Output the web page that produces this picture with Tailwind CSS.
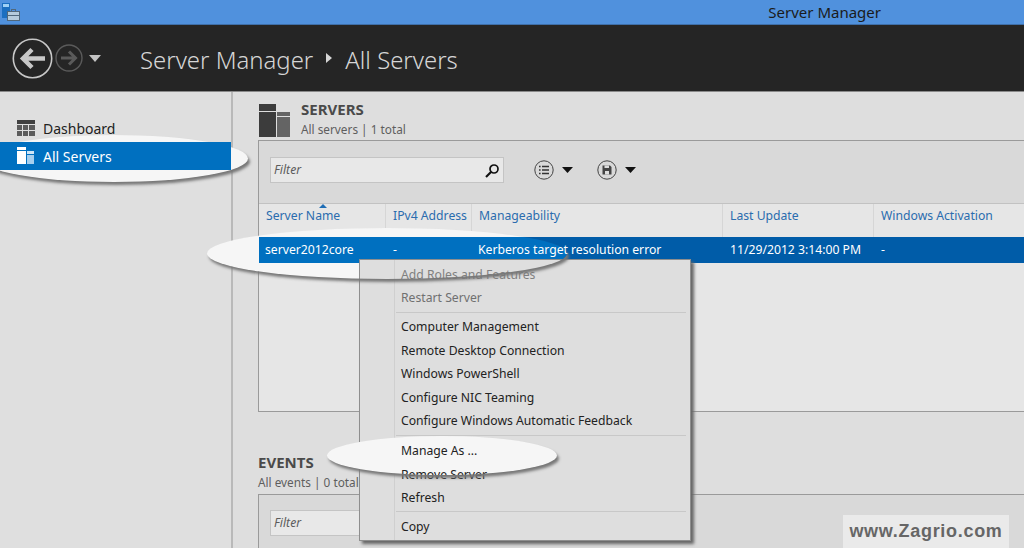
<!DOCTYPE html>
<html lang="en">
<head>
<meta charset="UTF-8">
<title>Server Manager - All Servers</title>
<script src="https://cdn.jsdelivr.net/npm/@tailwindcss/browser@4"></script>
</head>
<body class="w-[1024px] h-[548px] overflow-hidden bg-[#dedede] font-['Noto_Sans',sans-serif] relative">

  <!-- Title bar -->
  <header class="h-[25px] bg-[#5091dd] border-b border-[#3f6fa8] relative flex items-center justify-end pr-[143px]">
    <svg class="absolute left-[2px] top-[3px]" width="18" height="18" viewBox="0 0 18 18">
      <rect x="0" y="0" width="8" height="15" fill="#1c6fc0"/>
      <rect x="1" y="1" width="6" height="3" fill="#9fd0f5"/>
      <rect x="5.5" y="8.5" width="12" height="9" fill="#b5cbdc" stroke="#50687c" stroke-width="1"/>
      <rect x="9.5" y="6.5" width="4" height="2" fill="none" stroke="#50687c"/>
      <rect x="6" y="12" width="11" height="1" fill="#50687c"/>
    </svg>
    <span class="text-[15px] text-[#1b1b1b]">Server Manager</span>
  </header>

  <!-- Nav bar -->
  <nav class="h-[67px] bg-[#252525] border-b border-[#8a8a8a] flex items-center pl-[12px]">
    <svg width="41" height="41" viewBox="0 0 41 41" class="shrink-0">
      <circle cx="20.5" cy="20.5" r="19.2" fill="none" stroke="#c8c8c8" stroke-width="1.6"/>
      <path d="M33 20.5H11M20 11.5l-9 9 9 9" fill="none" stroke="#c8c8c8" stroke-width="4.5"/>
    </svg>
    <svg width="28" height="28" viewBox="0 0 28 28" class="shrink-0 ml-[2px]">
      <circle cx="14" cy="14" r="13" fill="none" stroke="#5a5a5a" stroke-width="1.4"/>
      <path d="M6 14h14M14 7.5l6.5 6.5-6.5 6.5" fill="none" stroke="#5a5a5a" stroke-width="3"/>
    </svg>
    <svg width="12" height="7" viewBox="0 0 12 7" class="shrink-0 ml-[6px]"><path d="M0 0h12L6 7z" fill="#c4c4c4"/></svg>
    <span class="ml-[39px] text-[23.9px] font-light text-[#d6d6d6] pt-[3px]">Server Manager</span>
    <svg width="6" height="10" viewBox="0 0 6 10" class="mx-[13px]"><path d="M0 0l6 5-6 5z" fill="#d6d6d6"/></svg>
    <span class="text-[23.9px] font-light text-[#d6d6d6] pt-[3px]">All Servers</span>
  </nav>

  <div class="flex h-[456px]">
    <!-- Sidebar -->
    <aside class="w-[231px] shrink-0 pt-[22px] border-r-[2px] border-[#b9b9b9] box-content bg-[#dfdfdf]">
      <div class="h-[28px] flex items-center pl-[17px] gap-[8px] relative z-20">
        <svg width="18" height="16" viewBox="0 0 18 16">
          <rect width="18" height="4" fill="#404040"/>
          <path d="M0 5h5v5H0zM6 5h5v5H6zM12 5h6v5h-6zM0 11h5v5H0zM6 11h5v5H6zM12 11h6v5h-6z" fill="#5c5c5c"/>
        </svg>
        <span class="text-[14px] text-[#222]">Dashboard</span>
      </div>
      <div class="h-[28px] bg-[#0070c0] flex items-center pl-[17px] gap-[8px] relative z-20">
        <svg width="18" height="18" viewBox="0 0 18 18">
          <rect width="9" height="17" y="0" fill="#fff"/>
          <rect x="0" y="3" width="9" height="1" fill="#0070c0"/>
          <rect x="10" y="4" width="7" height="3" fill="#cfe6f7"/>
          <rect x="10" y="8" width="7" height="9" fill="#a6cfee"/>
        </svg>
        <span class="text-[14px] text-white">All Servers</span>
      </div>
    </aside>

    <!-- Main -->
    <main class="flex-1 pl-[25px] pt-[10px] bg-[#dedede]">
      <section class="flex items-start gap-[11px] h-[38px] pl-[1px]">
        <svg width="31" height="33" viewBox="0 0 31 33" class="shrink-0 mt-[2px]">
          <rect width="17" height="7" y="0" x="0" fill="#3c3c3c"/>
          <rect width="17" height="25" y="8" x="0" fill="#3c3c3c"/>
          <rect width="13" height="4" y="8" x="18" fill="#646464"/>
          <rect width="13" height="20" y="13" x="18" fill="#646464"/>
        </svg>
        <div class="leading-none">
          <h2 class="text-[15px] font-bold text-[#4a4a4a] leading-[17px] -mt-[1px]">SERVERS</h2>
          <p class="text-[11.8px] text-[#5e5e5e] leading-[18px] mt-[2px]">All servers | 1 total</p>
        </div>
      </section>

      <!-- Servers panel -->
      <section class="h-[272px] border border-[#9a9a9a] border-r-0 bg-[#e6e6e6]">
        <div class="h-[62px] bg-[#d9d9d9] flex items-start pt-[16px] pl-[11px]">
          <div class="w-[234px] h-[26px] bg-[#e8e8e8] border border-[#c4c4c4] flex items-center justify-between pl-[3px] pr-[3px]">
            <span class="text-[12.2px] italic text-[#5c5c5c]">Filter</span>
            <svg width="15" height="15" viewBox="0 0 15 15"><circle cx="9" cy="6" r="4" fill="none" stroke="#111" stroke-width="1.7"/><path d="M6 9l-5 5" stroke="#111" stroke-width="2.2"/></svg>
          </div>
          <svg width="20" height="20" viewBox="0 0 20 20" class="ml-[30px] mt-[3px]">
            <circle cx="10" cy="10" r="9.2" fill="none" stroke="#444" stroke-width="1"/>
            <path d="M8 6.5h7M8 10h7M8 13.5h7M5 6.5h1.6M5 10h1.6M5 13.5h1.6" stroke="#333" stroke-width="1.7"/>
          </svg>
          <svg width="11" height="6" viewBox="0 0 11 6" class="ml-[8px] mt-[10px]"><path d="M0 0h11L5.5 6z" fill="#111"/></svg>
          <svg width="20" height="20" viewBox="0 0 20 20" class="ml-[24px] mt-[3px]">
            <circle cx="10" cy="10" r="9.2" fill="none" stroke="#444" stroke-width="1"/>
            <path d="M5.5 5.5h7.5l1.5 1.5v7.5h-9z" fill="#444"/><rect x="7.5" y="5.5" width="4.5" height="2.5" fill="#ddd"/><rect x="8" y="11" width="4" height="3.5" fill="#ddd"/>
          </svg>
          <svg width="11" height="6" viewBox="0 0 11 6" class="ml-[8px] mt-[10px]"><path d="M0 0h11L5.5 6z" fill="#111"/></svg>
        </div>
        <div class="h-[34px] flex text-[12.2px] text-[#2a6cae] border-t border-[#c2c2c2] relative">
          <svg width="8" height="4" viewBox="0 0 8 4" class="absolute left-[60px] top-[0px]"><path d="M4 0l4 4H0z" fill="#1f6db5"/></svg>
          <div class="w-[127px] pl-[7px] pt-[3px] border-r border-[#d6d6d6]">Server Name</div>
          <div class="w-[86px] pl-[7px] pt-[3px] border-r border-[#d6d6d6]">IPv4 Address</div>
          <div class="w-[251px] pl-[7px] pt-[3px] border-r border-[#d6d6d6]">Manageability</div>
          <div class="w-[151px] pl-[7px] pt-[3px] border-r border-[#d6d6d6]">Last Update</div>
          <div class="pl-[7px] pt-[3px]">Windows Activation</div>
        </div>
        <!-- Selected row: lighter blue inside the callout -->
        <div class="h-[26px] flex items-center text-[12.2px] text-white bg-[#005ca8] relative z-20 overflow-hidden pt-[1px]">
          <div class="absolute left-[-52px] top-[-9px] w-[360px] h-[51px] rounded-[50%] bg-[#0070c0]"></div>
          <div class="w-[127px] pl-[6px] relative">server2012core</div>
          <div class="w-[85px] pl-[7px] relative">-</div>
          <div class="w-[252px] pl-[7px] relative">Kerberos target resolution error</div>
          <div class="w-[151px] pl-[7px] relative">11/29/2012 3:14:00 PM</div>
          <div class="pl-[7px] relative">-</div>
        </div>
      </section>

      <!-- Events -->
      <section class="mt-[42px] text-[#4a4a4a]">
        <h2 class="text-[15px] font-bold leading-[17px]">EVENTS</h2>
        <p class="text-[11.8px] text-[#5e5e5e] leading-[18px] mt-[2px]">All events | 0 total</p>
        <div class="h-[60px] border border-[#9a9a9a] border-r-0 bg-[#d9d9d9] mt-[3px] pt-[15px] pl-[11px]">
          <div class="w-[234px] h-[26px] bg-[#e8e8e8] border border-[#c4c4c4] pl-[3px] flex items-center">
            <span class="text-[12.2px] italic text-[#5c5c5c]">Filter</span>
          </div>
        </div>
      </section>
    </main>
  </div>

  <!-- Callout ellipses -->
  <div class="absolute left-[-20px] top-[135px] w-[268px] h-[47px] rounded-[50%] bg-[#f6f6f6] shadow-[2px_3px_3px_#777] z-10"></div>
  <div class="absolute left-[207px] top-[228px] w-[360px] h-[51px] rounded-[50%] bg-[#f6f6f6] z-10"></div>

  <!-- Context menu -->
  <div class="absolute left-[359px] top-[259px] w-[332px] h-[282px] bg-[#dedede] border border-[#8e8e8e] shadow-[3px_3px_3px_#666] z-30 text-[12.2px] text-[#222]">
    <div class="absolute left-[34px] top-0 bottom-0 w-px bg-[#cfcfcf]"></div>
    <div class="absolute left-[-33px] top-[176px] w-[230px] h-[39px] rounded-[50%] bg-[#f6f6f6]"></div>
    <div class="pl-[41px] pt-[3px] relative z-10">
      <div class="h-[23px] leading-[23px] text-[#808080]">Add Roles and Features</div>
      <div class="h-[23px] leading-[23px] text-[#707070]">Restart Server</div>
      <div class="h-px bg-[#c8c8c8] ml-[-5px] mr-[4px] mt-[3px] mb-[2px]"></div>
      <div class="h-[23.5px] leading-[23px]">Computer Management</div>
      <div class="h-[23.5px] leading-[23px]">Remote Desktop Connection</div>
      <div class="h-[23.5px] leading-[23px]">Windows PowerShell</div>
      <div class="h-[23.5px] leading-[23px]">Configure NIC Teaming</div>
      <div class="h-[23.5px] leading-[23px]">Configure Windows Automatic Feedback</div>
      <div class="h-px bg-[#c8c8c8] ml-[-5px] mr-[4px] mt-[2.5px] mb-[3px]"></div>
      <div class="h-[23.5px] leading-[23px]">Manage As ...</div>
      <div class="h-[23.5px] leading-[23px]">Remove Server</div>
      <div class="h-[23.5px] leading-[23px]">Refresh</div>
      <div class="h-px bg-[#c8c8c8] ml-[-5px] mr-[4px] mt-[1px] mb-[3px]"></div>
      <div class="h-[23px] leading-[23px]">Copy</div>
    </div>
    <!-- Callout shadow falls across the menu text -->
    <div class="absolute left-[-33px] top-[176px] w-[230px] h-[39px] rounded-[50%] shadow-[2px_3px_3px_#777] z-20"></div>
  </div>
  <div class="absolute left-[207px] top-[228px] w-[360px] h-[51px] rounded-[50%] shadow-[2px_3px_3px_#777] z-40"></div>

  <!-- Watermark -->
  <div class="absolute left-[843px] bottom-0 w-[166px] h-[33px] bg-[#eaeaea] z-40 flex items-center justify-center text-[18px] font-bold text-[#666] font-['Liberation_Sans',sans-serif] tracking-[0.7px]">www.Zagrio.com</div>
</body>
</html>
